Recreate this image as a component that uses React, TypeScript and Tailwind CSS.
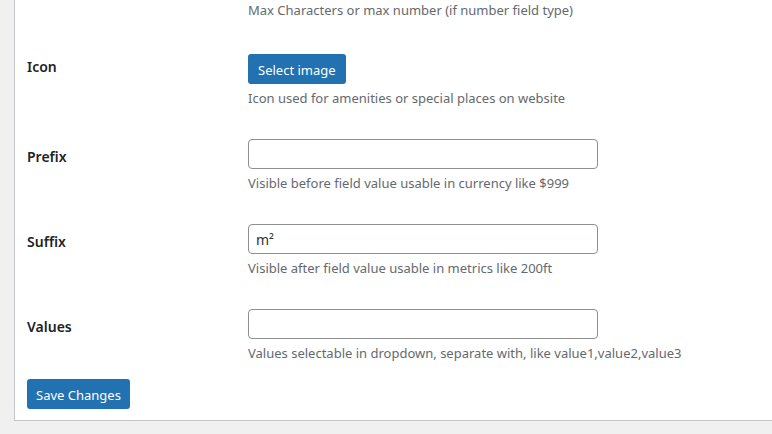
// WP-style settings form, tail end of a custom field editor
const font = { fontFamily: '"Noto Sans", "Open Sans", sans-serif' };

type Row = {
  label: string;
  labelPad: string;
  kind: "input" | "button";
  value?: string;
  help: string;
};

const rows: Row[] = [
  { label: "Icon", labelPad: "pt-[15px]", kind: "button", help: "Icon used for amenities or special places on website" },
  { label: "Prefix", labelPad: "pt-[20px]", kind: "input", value: "", help: "Visible before field value usable in currency like $999" },
  { label: "Suffix", labelPad: "pt-[20px]", kind: "input", value: "m²", help: "Visible after field value usable in metrics like 200ft" },
  { label: "Values", labelPad: "pt-[20px]", kind: "input", value: "", help: "Values selectable in dropdown, separate with, like value1,value2,value3" },
];

function Help({ children }: { children: React.ReactNode }) {
  return <p className="text-[13px] leading-[19.5px] text-[#646970]">{children}</p>;
}

export default function App() {
  return (
    <div className="h-[434px] w-[772px] overflow-hidden bg-[#f0f0f1]" style={font}>
      <div className="ml-[14px] w-[800px] border-l border-b border-[#c3c4c7] bg-white pl-[12px] pb-[11px]">
        {/* previous row, cut off at the top */}
        <div className="flex h-[39px]">
          <div className="w-[221px] shrink-0" />
          <div className="pt-[0.5px]">
            <Help>Max Characters or max number (if number field type)</Help>
          </div>
        </div>

        {rows.map((r) => (
          <div key={r.label} className="flex h-[85px]">
            <div className={`w-[221px] shrink-0 ${r.labelPad}`}>
              <span className="text-[14px] font-semibold leading-[1.3] text-[#1d2327]">{r.label}</span>
            </div>
            <div className="pt-[15px]">
              {r.kind === "button" ? (
                <button className="h-[30px] rounded-[3px] bg-[#2271b1] px-[10px] pt-[3px] text-[13px] leading-[19px] text-white">
                  Select image
                </button>
              ) : (
                <input
                  type="text"
                  defaultValue={r.value}
                  className="block h-[30px] w-[350px] rounded-[4px] border border-[#8c8f94] bg-white px-[7px] text-[14px] text-[#2c3338] outline-none"
                />
              )}
              <div className="mt-[5px]">
                <Help>{r.help}</Help>
              </div>
            </div>
          </div>
        ))}

        <button className="h-[30px] w-[103px] rounded-[3px] bg-[#2271b1] pt-[3px] text-[13px] leading-[19px] text-white">
          Save Changes
        </button>
      </div>
    </div>
  );
}
